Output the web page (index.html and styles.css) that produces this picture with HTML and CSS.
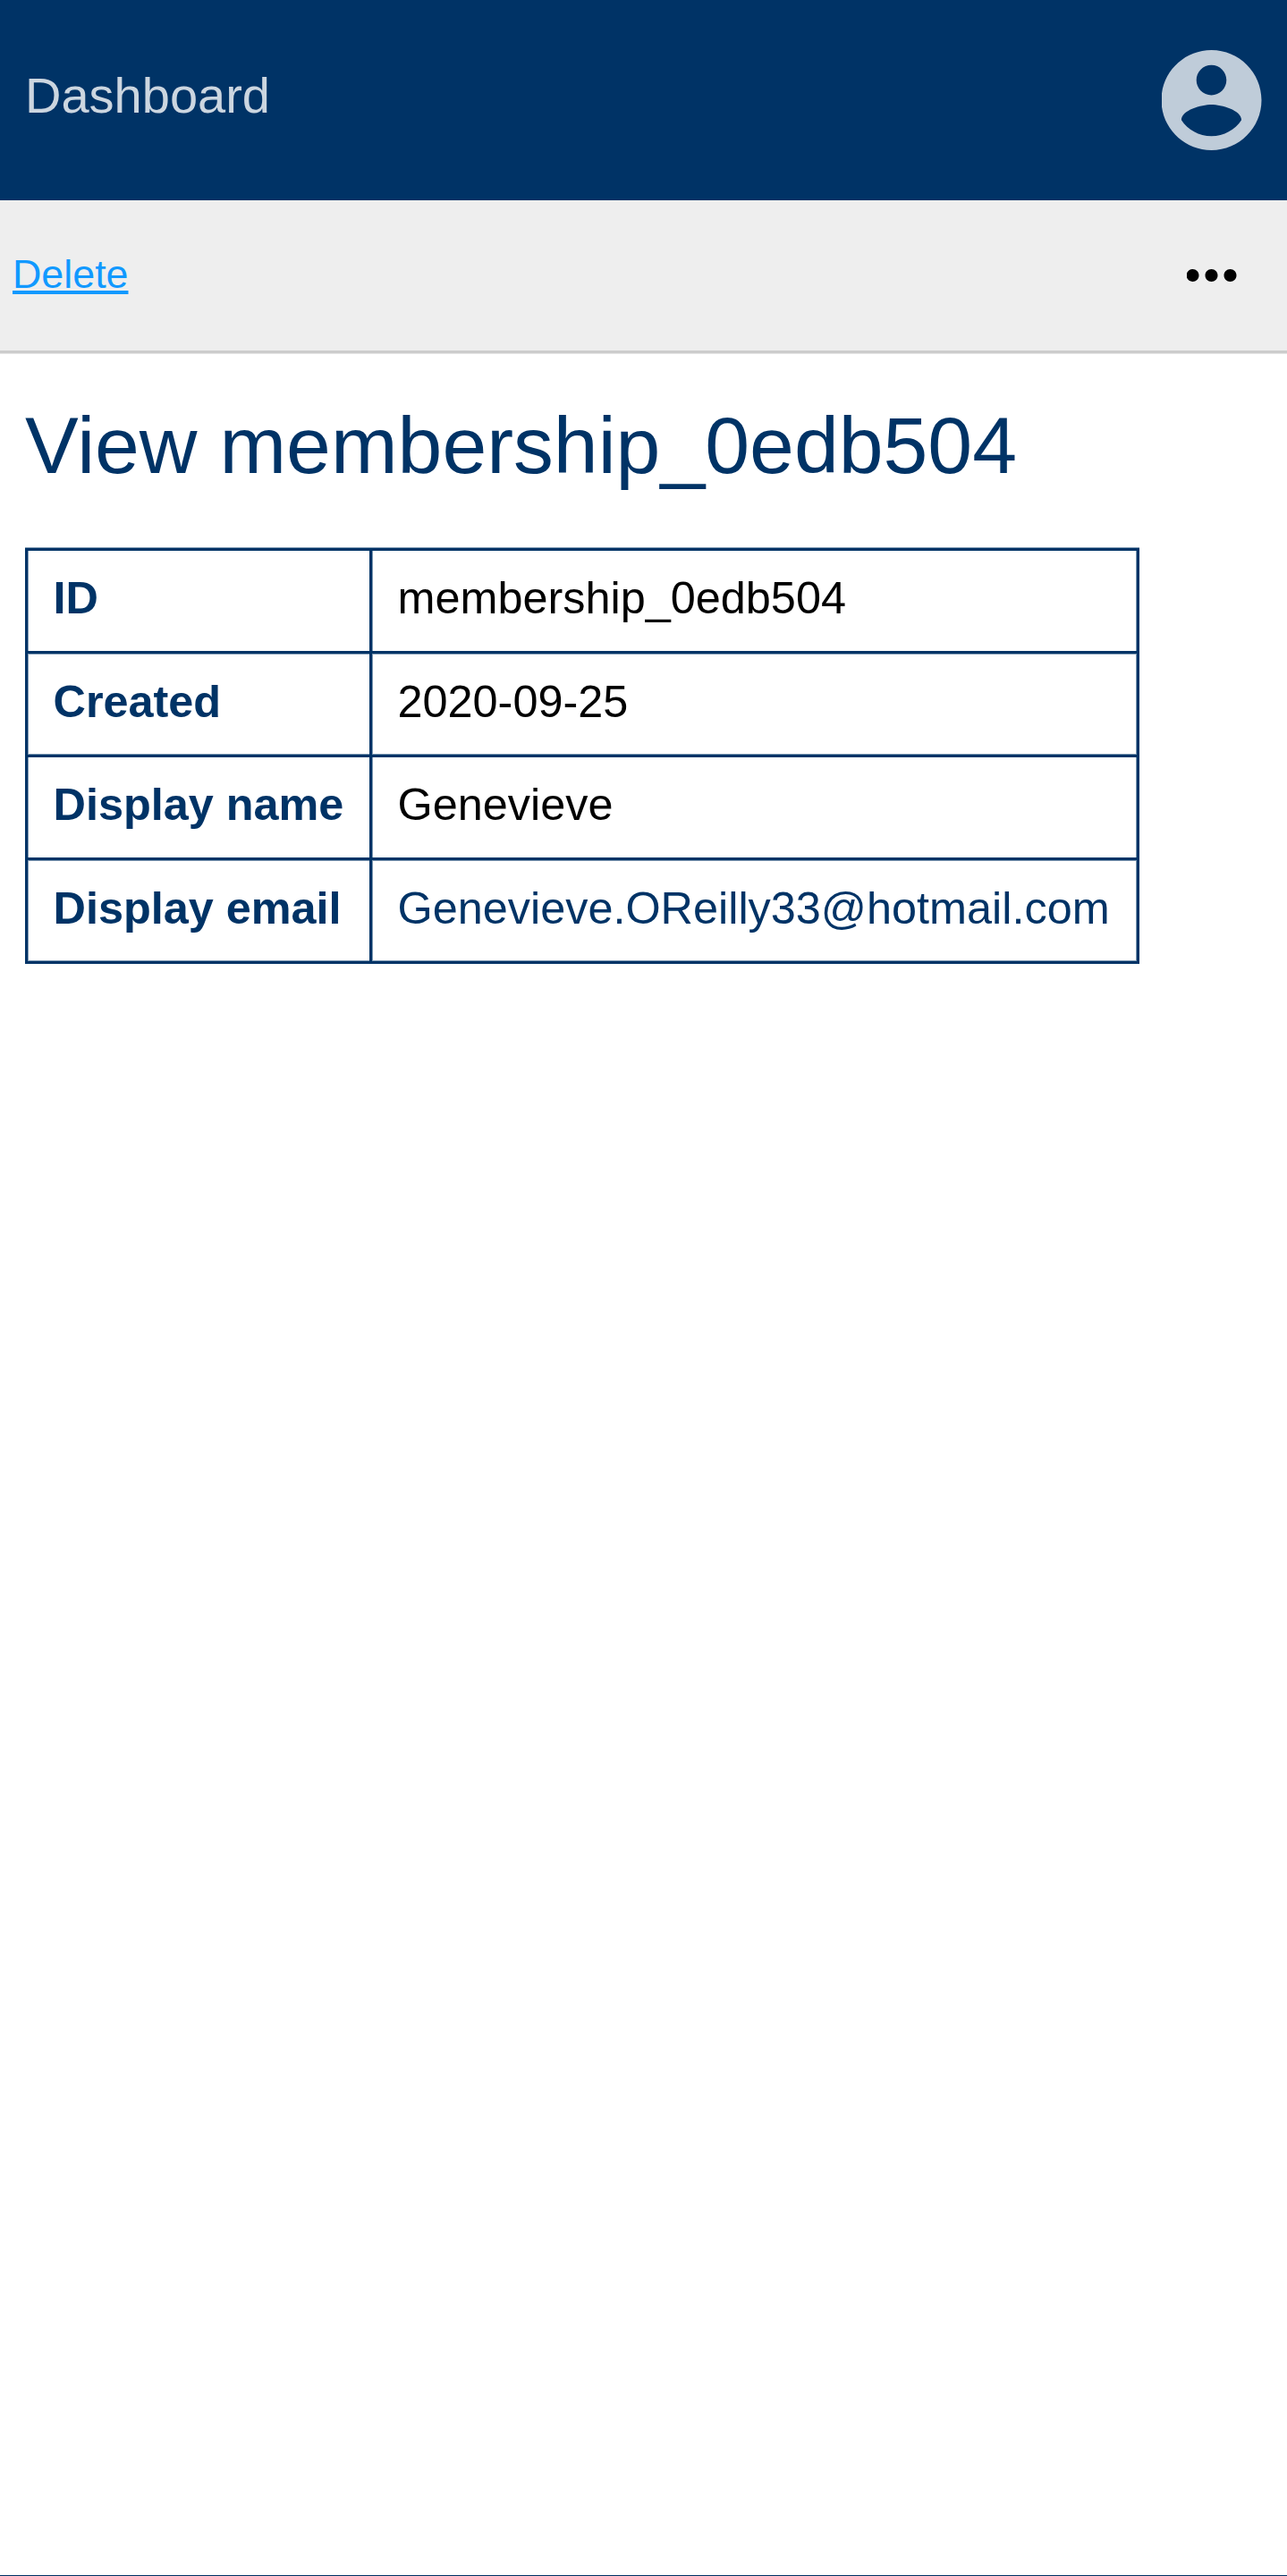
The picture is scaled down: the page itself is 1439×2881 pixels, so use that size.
FILE: index.html
```html
<!DOCTYPE html>
<html lang="en">
<head>
<meta charset="utf-8">
<title>View membership_0edb504</title>
<link rel="stylesheet" href="styles.css">
</head>
<body>
<header class="header">
  <a class="header-link">Dashboard</a>
  <svg class="account-icon" viewBox="2.09 2 20 20" aria-hidden="true"><path d="M12 2C6.48 2 2 6.48 2 12s4.48 10 10 10 10-4.48 10-10S17.52 2 12 2zm0 3c1.66 0 3 1.34 3 3s-1.34 3-3 3-3-1.34-3-3 1.34-3 3-3zm0 14.2c-2.5 0-4.71-1.28-6-3.22.03-1.99 4-3.08 6-3.08 1.99 0 5.97 1.09 6 3.08-1.29 1.94-3.5 3.22-6 3.22z"/></svg>
</header>
<nav class="toolbar">
  <a class="delete-link">Delete</a>
  <svg class="more-icon" viewBox="4.14 10 16 4" aria-hidden="true"><path d="M6 10c-1.1 0-2 .9-2 2s.9 2 2 2 2-.9 2-2-.9-2-2-2zm12 0c-1.1 0-2 .9-2 2s.9 2 2 2 2-.9 2-2-.9-2-2-2zm-6 0c-1.1 0-2 .9-2 2s.9 2 2 2 2-.9 2-2-.9-2-2-2z"/></svg>
</nav>
<main class="content">
  <h1 class="title">View membership_0edb504</h1>
  <table class="details">
    <tr><th>ID</th><td>membership_0edb504</td></tr>
    <tr><th>Created</th><td>2020-09-25</td></tr>
    <tr><th>Display name</th><td>Genevieve</td></tr>
    <tr><th>Display email</th><td><a class="email">Genevieve.OReilly33@hotmail.com</a></td></tr>
  </table>
</main>
<footer class="footer"></footer>
</body>
</html>
```
FILE: styles.css
```css
:root {
  --navy: #003366;
  --navy-soft: #8099b3;
}

* {
  box-sizing: border-box;
}

body {
  margin: 0;
  height: 2881px;
  display: flex;
  flex-direction: column;
  background: #fff;
  color: #000;
  font-family: "Liberation Sans", Arial, sans-serif;
  font-size: 50.4px;
}

.header {
  height: 224px;
  flex: none;
  display: flex;
  align-items: flex-start;
  justify-content: space-between;
  padding: 56px 28px 0;
  background: var(--navy);
}

.header-link {
  padding-top: 19px;
  color: #ccd6e0;
  font-size: 56px;
  line-height: 64px;
}

.account-icon {
  width: 112px;
  height: 112px;
  overflow: hidden;
  fill: #bfccd9;
}

.toolbar {
  height: 171px;
  flex: none;
  display: flex;
  align-items: center;
  justify-content: space-between;
  padding: 0 56px 0 14px;
  background: #eee;
  border-bottom: 3px solid #ccc;
  box-shadow: 0 1px #e6e6e6;
}

.delete-link {
  padding-bottom: 4px;
  color: #1199ff;
  font-size: 44.8px;
  line-height: 52px;
  text-decoration: underline;
  text-decoration-thickness: 4px;
  text-underline-offset: 3px;
  text-decoration-skip-ink: none;
}

.more-icon {
  width: 56px;
  height: 14px;
  overflow: hidden;
}

.content {
  flex: 1;
  padding: 51px 28px 0;
}

.title {
  margin: 0 0 63px;
  color: var(--navy);
  font-size: 89.6px;
  font-weight: 400;
  line-height: 104px;
}

.details {
  width: 1246px;
  table-layout: fixed;
  border: 3px solid var(--navy);
  border-spacing: 0;
  box-shadow: 0 -1px var(--navy-soft);
}

.details th,
.details td {
  height: 115px;
  padding: 0 20px 6px 28.5px;
  border-bottom: 3px solid var(--navy);
  line-height: 58px;
  text-align: left;
  white-space: nowrap;
}

.details th {
  width: 385px;
  border-right: 3px solid var(--navy);
  color: var(--navy);
  box-shadow: inset 1px 0 var(--navy-soft);
}

.details td {
  box-shadow: inset 1px 0 var(--navy-soft), inset -1px 0 var(--navy-soft);
}

.details tr:nth-child(even) > th {
  height: 116px;
  box-shadow: inset 1px 0 var(--navy-soft), inset 0 1px var(--navy-soft), inset 0 -1px var(--navy-soft);
}

.details tr:nth-child(even) > td {
  box-shadow: inset 1px 0 var(--navy-soft), inset -1px 0 var(--navy-soft), inset 0 1px var(--navy-soft), inset 0 -1px var(--navy-soft);
}

.details tr:last-child > th,
.details tr:last-child > td {
  height: 113px;
  border-bottom: 0;
}

.email {
  color: var(--navy);
}

.footer {
  height: 1px;
  flex: none;
  background: var(--navy);
}
```
